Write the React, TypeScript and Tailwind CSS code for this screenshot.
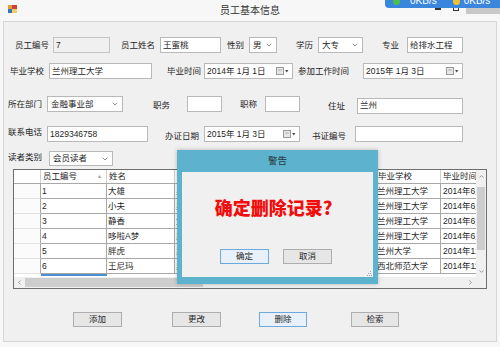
import { ChevronDown, ChevronLeft, ChevronRight, ChevronUp } from 'lucide-react';

const people = [
  { id: '1', name: '大雄', sex: '男', edu: '本科', major: '土木工程', school: '兰州理工大学', date: '2014年6月30日' },
  { id: '2', name: '小夫', sex: '男', edu: '本科', major: '机械设计', school: '兰州理工大学', date: '2014年6月30日' },
  { id: '3', name: '静香', sex: '女', edu: '本科', major: '会计学', school: '兰州理工大学', date: '2014年6月30日' },
  { id: '4', name: '哆啦A梦', sex: '男', edu: '大专', major: '电子信息', school: '兰州理工大学', date: '2014年6月30日' },
  { id: '5', name: '胖虎', sex: '男', edu: '本科', major: '体育', school: '兰州大学', date: '2014年12月1日' },
  { id: '6', name: '王尼玛', sex: '男', edu: '硕士', major: '新闻学', school: '西北师范大学', date: '2014年11月5日' },
];

function Field({ className = '', text = '', disabled = false }: { className?: string; text?: string; disabled?: boolean }) {
  return (
    <div
      className={`h-full shrink-0 border flex items-center px-[2px] whitespace-nowrap overflow-hidden ${
        disabled ? 'bg-[#f0f0f0] border-[#c4c4c4]' : 'bg-white border-[#b9b9b9]'
      } ${className}`}
    >
      {text}
    </div>
  );
}

function Combo({ className = '', text }: { className?: string; text: string }) {
  return (
    <div className={`h-full shrink-0 border border-[#b9b9b9] bg-white flex items-center justify-between pl-[3px] pr-[3px] ${className}`}>
      <span className="whitespace-nowrap">{text}</span>
      <ChevronDown size={8} strokeWidth={2} className="text-[#555]" />
    </div>
  );
}

function DateBox({ className = '', text }: { className?: string; text: string }) {
  return (
    <div className={`h-full shrink-0 border border-[#b9b9b9] bg-white flex items-center justify-between pl-[2px] pr-[3px] ${className}`}>
      <span className="whitespace-nowrap">{text}</span>
      <svg width="13" height="8" viewBox="0 0 13 8">
        <rect x="0.5" y="0.5" width="7" height="7" fill="#e6e6e6" stroke="#9a9a9a" />
        <line x1="2" y1="3" x2="6" y2="3" stroke="#b0b0b0" />
        <path d="M9 3 L12.5 3 L10.75 5.5 Z" fill="#555" />
      </svg>
    </div>
  );
}

function Label({ className = '', text }: { className?: string; text: string }) {
  return <span className={`shrink-0 whitespace-nowrap ${className}`}>{text}</span>;
}

function Btn({ className = '', text, focus = false }: { className?: string; text: string; focus?: boolean }) {
  return (
    <div
      className={`h-full shrink-0 border flex items-center justify-center ${
        focus ? 'border-[#6fa8dc] bg-[#e8f1fa]' : 'border-[#adadad] bg-[#e6e6e6]'
      } ${className}`}
    >
      {text}
    </div>
  );
}

export default function App() {
  return (
    <div className="relative w-[500px] h-[347px] overflow-hidden bg-[#f7f7f7] text-[8.5px] leading-none text-[#1e1e1e] font-['Liberation_Sans','Noto_Sans_CJK_SC',sans-serif]">
      {/* title bar */}
      <div className="relative h-[21px] flex items-center justify-center">
        <svg className="absolute left-[8px] top-[5px]" width="9" height="8" viewBox="0 0 9 8">
          <rect x="0" y="0" width="4" height="4" fill="#e0a030" />
          <rect x="4" y="0" width="5" height="4" fill="#d04040" />
          <rect x="0" y="4" width="4" height="4" fill="#3a70c0" />
          <rect x="4" y="4" width="5" height="4" fill="#f0d060" />
        </svg>
        <span className="text-[10px] text-[#333]">员工基本信息</span>
        <div className="absolute left-[435px] top-[8px] w-[6px] h-[2px] bg-[#333]" />
        <div className="absolute left-[453px] top-[6px] w-[6px] h-[5px] border border-[#333]" />
        <div className="absolute left-[466px] top-[3px] w-[34px] h-[11px] bg-[#c8c8c8]" />
      </div>

      {/* floating net speed widget */}
      <div className="absolute left-[385px] top-[-6px] w-[118px] h-[14px] rounded-[4px] bg-[#3b86dd] flex items-center text-white text-[10px]">
        <span className="ml-[8px] w-[7px] h-[7px] rounded-full bg-[#4cc04c]" />
        <span className="ml-[10px]">0KB/s</span>
        <span className="ml-[16px] w-[7px] h-[7px] rounded-full bg-[#f0c030]" />
        <span className="ml-[4px]">0KB/s</span>
      </div>

      {/* client area */}
      <div className="mx-[3px] h-[321px] border border-[#d6d6d6] bg-[#f0f0f0] flex flex-col">
        {/* row 1 */}
        <div className="mt-[15px] h-[16px] flex items-center">
          <Label className="ml-[11px] w-[38px]" text="员工编号" />
          <Field className="w-[57px]" text="7" disabled />
          <Label className="ml-[11px] w-[39px]" text="员工姓名" />
          <Field className="w-[61px]" text="王蜜桃" />
          <Label className="ml-[6px] w-[22px]" text="性别" />
          <Combo className="w-[28px]" text="男" />
          <Label className="ml-[19px] w-[22px]" text="学历" />
          <Combo className="w-[45px]" text="大专" />
          <Label className="ml-[19px] w-[25px]" text="专业" />
          <Field className="w-[56px]" text="给排水工程" />
        </div>

        {/* row 2 */}
        <div className="mt-[10px] h-[16px] flex items-center">
          <Label className="ml-[6px] w-[39px]" text="毕业学校" />
          <Field className="w-[103px]" text="兰州理工大学" />
          <Label className="ml-[15px] w-[37px]" text="毕业时间" />
          <DateBox className="w-[89px]" text="2014年  1月  1日" />
          <Label className="ml-[5px] w-[65px]" text="参加工作时间" />
          <DateBox className="w-[100px]" text="2015年  1月  3日" />
        </div>

        {/* row 3 */}
        <div className="mt-[17px] h-[16px] flex items-center">
          <Label className="ml-[4px] w-[39px]" text="所在部门" />
          <Combo className="w-[76px]" text="金融事业部" />
          <Label className="ml-[30px] w-[34px] pt-[3px]" text="职务" />
          <Field className="w-[35px]" />
          <Label className="ml-[18px] w-[25px]" text="职称" />
          <Field className="w-[35px]" />
          <Label className="ml-[28px] w-[29px] pt-[4px]" text="住址" />
          <Field className="w-[106px] mt-[3px]" text="兰州" />
        </div>

        {/* row 4 */}
        <div className="mt-[14px] h-[16px] flex items-center">
          <Label className="ml-[4px] w-[39px] pb-[4px]" text="联系电话" />
          <Field className="w-[101px]" text="1829346758" />
          <Label className="ml-[17px] w-[39px] pt-[4px]" text="办证日期" />
          <DateBox className="w-[96px]" text="2015年  1月  3日" />
          <Label className="ml-[12px] w-[43px] pt-[4px]" text="书证编号" />
          <Field className="w-[108px]" />
        </div>

        {/* row 5 */}
        <div className="mt-[9px] h-[15px] flex items-center">
          <Label className="ml-[4px] w-[41px] pb-[3px]" text="读者类别" />
          <Combo className="w-[64px]" text="会员读者" />
        </div>

        {/* data grid */}
        <div className="mt-[3px] ml-[9px] w-[474px] h-[120px] border border-[#6e6e6e] bg-white flex flex-col">
          <div className="flex h-[107px]">
            <div className="w-[462px] flex flex-col">
              <div className="grid grid-cols-[27px_66px_68px_67px_67px_67px_65px_35px] h-[14px] border-b border-[#a8a8a8]">
                <div className="border-r border-[#d0d0d0]" />
                <div className="border-r border-[#d0d0d0] flex items-center justify-between pl-[2px] pr-[4px]">
                  <span>员工编号</span>
                  <span className="text-[5px] text-[#9a9a9a]">▲</span>
                </div>
                <div className="border-r border-[#d0d0d0] flex items-center pl-[2px]">姓名</div>
                <div className="border-r border-[#d0d0d0] flex items-center pl-[2px]">性别</div>
                <div className="border-r border-[#d0d0d0] flex items-center pl-[2px]">学历</div>
                <div className="border-r border-[#d0d0d0] flex items-center pl-[2px]">专业</div>
                <div className="border-r border-[#d0d0d0] flex items-center pl-[2px]">毕业学校</div>
                <div className="flex items-center pl-[2px] whitespace-nowrap overflow-hidden">毕业时间</div>
              </div>
              {people.map((p) => (
                <div key={p.id} className="grid grid-cols-[27px_66px_68px_67px_67px_67px_65px_35px] h-[15px]">
                  <div className="border-r border-b border-r-[#a8a8a8] border-b-[#e2e2e2] bg-[#fbfbfb]" />
                  <div className="border-r border-b border-[#a8a8a8] flex items-center pl-[1px]">{p.id}</div>
                  <div className="border-r border-b border-[#a8a8a8] flex items-center pl-[1px]">{p.name}</div>
                  <div className="border-r border-b border-[#a8a8a8] flex items-center pl-[1px]">{p.sex}</div>
                  <div className="border-r border-b border-[#a8a8a8] flex items-center pl-[1px]">{p.edu}</div>
                  <div className="border-r border-b border-[#a8a8a8] flex items-center pl-[1px]">{p.major}</div>
                  <div className="border-r border-b border-[#a8a8a8] flex items-center pl-[1px] whitespace-nowrap overflow-hidden">{p.school}</div>
                  <div className="border-b border-[#a8a8a8] flex items-center pl-[2px] whitespace-nowrap overflow-hidden">{p.date}</div>
                </div>
              ))}
              <div className="flex">
                <div className="w-[27px]" />
                <div className="w-[66px] h-[2px] bg-[#4a90d0]" />
              </div>
            </div>
            <div className="w-[10px] bg-[#f0f0f0] flex flex-col items-center">
              <div className="h-[12px] flex items-center justify-center">
                <ChevronUp size={7} strokeWidth={2} className="text-[#606060]" />
              </div>
              <div className="mt-[5px] w-[8px] h-[63px] bg-[#cdcdcd]" />
              <div className="flex-1" />
              <div className="h-[12px] flex items-center justify-center">
                <ChevronDown size={7} strokeWidth={2} className="text-[#606060]" />
              </div>
            </div>
          </div>
          <div className="h-[11px] flex bg-[#f0f0f0]">
            <div className="w-[11px] flex items-center justify-center">
              <ChevronLeft size={7} strokeWidth={2} className="text-[#606060]" />
            </div>
            <div className="my-[1px] w-[178px] bg-[#cdcdcd]" />
            <div className="flex-1" />
            <div className="w-[11px] flex items-center justify-center">
              <ChevronRight size={7} strokeWidth={2} className="text-[#606060]" />
            </div>
            <div className="w-[10px] bg-[#f0f0f0]" />
          </div>
        </div>

        {/* bottom buttons */}
        <div className="mt-[23px] h-[15px] flex items-center">
          <Btn className="ml-[69px] w-[49px]" text="添加" />
          <Btn className="ml-[50px] w-[49px]" text="更改" />
          <Btn className="ml-[38px] w-[48px]" text="删除" focus />
          <Btn className="ml-[44px] w-[48px]" text="检索" />
        </div>
      </div>

      {/* warning dialog */}
      <div className="absolute left-[177px] top-[150px] w-[201px] h-[134px] bg-[#5db3cd] flex flex-col shadow-[0_0_4px_rgba(0,0,0,0.25)]">
        <div className="h-[22px] flex items-center justify-center text-[9.5px] text-[#2a3a40]">警告</div>
        <div className="relative mx-[5px] h-[105px] bg-[#f0f0f0] flex flex-col items-center pr-[8px]">
          <div className="mt-[24px] text-[18px] leading-[22px] font-black text-[#f20d0d] font-['Noto_Sans_CJK_SC',sans-serif]">
            确定删除记录?
          </div>
          <div className="mt-[31px] h-[15px] flex gap-[14px] pl-[5px]">
            <Btn className="w-[49px]" text="确定" focus />
            <Btn className="w-[49px]" text="取消" />
          </div>
          <svg className="absolute right-[1px] bottom-[1px]" width="5" height="5" viewBox="0 0 5 5">
            <rect x="3" y="0" width="1" height="1" fill="#a0a0a0" />
            <rect x="1" y="2" width="1" height="1" fill="#a0a0a0" />
            <rect x="3" y="2" width="1" height="1" fill="#a0a0a0" />
            <rect x="0" y="4" width="1" height="1" fill="#a0a0a0" />
            <rect x="2" y="4" width="1" height="1" fill="#a0a0a0" />
            <rect x="4" y="4" width="1" height="1" fill="#a0a0a0" />
          </svg>
        </div>
      </div>
    </div>
  );
}
